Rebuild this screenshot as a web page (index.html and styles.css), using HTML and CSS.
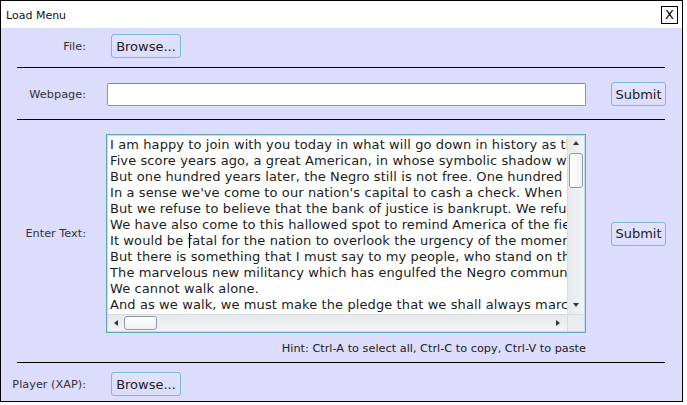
FILE: index.html
```html
<!DOCTYPE html>
<html>
<head>
<meta charset="utf-8">
<link rel="stylesheet" href="styles.css">
</head>
<body>
<div class="window">
  <div class="titlebar">
    <span class="title">Load Menu</span>
    <span class="close">X</span>
  </div>
  <div class="panel">
    <div class="row row-file">
      <div class="label">File:</div>
      <div class="field"><button class="btn browse">Browse...</button></div>
    </div>
    <div class="sep"></div>
    <div class="row row-web">
      <div class="label">Webpage:</div>
      <div class="field"><div class="input"></div></div>
      <button class="btn submit">Submit</button>
    </div>
    <div class="sep"></div>
    <div class="text-section">
      <div class="row row-text">
        <div class="label">Enter Text:</div>
        <div class="field">
          <div class="textarea">
            <div class="text-view">
              <div class="line">I am happy to join with you today in what will go down in history as the greatest demonstration for freedom in the history of our nation.</div>
              <div class="line">Five score years ago, a great American, in whose symbolic shadow we stand today, signed the Emancipation Proclamation.</div>
              <div class="line">But one hundred years later, the Negro still is not free. One hundred years later, the life of the Negro is still sadly crippled.</div>
              <div class="line">In a sense we've come to our nation's capital to cash a check. When the architects of our republic wrote the magnificent words.</div>
              <div class="line">But we refuse to believe that the bank of justice is bankrupt. We refuse to believe that there are insufficient funds.</div>
              <div class="line">We have also come to this hallowed spot to remind America of the fierce urgency of Now.</div>
              <div class="line">It would be f<span class="caret"></span>atal for the nation to overlook the urgency of the moment.</div>
              <div class="line">But there is something that I must say to my people, who stand on the warm threshold which leads into the palace of justice.</div>
              <div class="line">The marvelous new militancy which has engulfed the Negro community must not lead us to a distrust of all white people.</div>
              <div class="line">We cannot walk alone.</div>
              <div class="line">And as we walk, we must make the pledge that we shall always march ahead.</div>
            </div>
            <div class="vscroll">
              <span class="arrow up"></span>
              <span class="vthumb"></span>
              <span class="vspace"></span>
              <span class="arrow down"></span>
            </div>
            <div class="hscroll">
              <span class="arrow left"></span>
              <span class="hthumb"></span>
              <span class="hspace"></span>
              <span class="arrow right"></span>
            </div>
            <div class="corner"></div>
          </div>
        </div>
        <button class="btn submit">Submit</button>
      </div>
      <div class="hint">Hint: Ctrl-A to select all, Ctrl-C to copy, Ctrl-V to paste</div>
    </div>
    <div class="sep"></div>
    <div class="row row-player">
      <div class="label">Player (XAP):</div>
      <div class="field"><button class="btn browse">Browse...</button></div>
    </div>
  </div>
</div>
</body>
</html>
```

FILE: styles.css
```css
* { box-sizing: border-box; }
html, body { margin: 0; padding: 0; background: #ffffff; }
body { font-family: "DejaVu Sans", Verdana, sans-serif; color: #222; }

.window {
  width: 683px;
  height: 402px;
  border: 1px solid #000;
  background: #dcdcfc;
  display: flex;
  flex-direction: column;
}

.titlebar {
  flex: none;
  height: 27px;
  background: #fff;
  display: flex;
  align-items: flex-start;
  justify-content: space-between;
  padding: 0 4px 0 5px;
}
.title {
  font-size: 11px;
  line-height: 13px;
  margin-top: 8px;
  color: #111;
}
.close {
  margin-top: 5px;
  width: 17px;
  height: 18px;
  border: 1px solid #000;
  font-size: 13px;
  line-height: 16px;
  text-align: center;
  color: #000;
}

.panel { display: flex; flex-direction: column; flex: 1; min-height: 0; }

.row { display: flex; align-items: center; flex: none; }
.label {
  width: 85px;
  margin-right: 21px;
  text-align: right;
  font-size: 11.3px;
  color: #333;
  white-space: nowrap;
}
.field { width: 479px; }

.row-file { padding: 6px 0 9px; }
.row-web { padding: 14px 0 13px; }
.row-text { padding-top: 14px; }
.row-player { padding-top: 9px; }

.sep {
  flex: none;
  height: 1px;
  background: #000;
  margin-left: 16px;
  width: 648px;
}

.btn {
  font-family: "DejaVu Sans", Verdana, sans-serif;
  font-size: 13px;
  color: #222;
  background: linear-gradient(#e2e2fc, #dcdcfc);
  border: 1px solid #78bcd4;
  border-radius: 3px;
  height: 24px;
  padding: 0 4px;
  margin: 0;
}
.browse { width: 70px; margin-left: 4px; }
.submit { width: 55px; margin-left: 25px; padding: 0; }

.input {
  width: 479px;
  height: 23px;
  background: #fff;
  border: 1px solid #8a97ab;
  border-top-color: #7c889c;
  border-radius: 2px;
}

.textarea {
  width: 480px;
  height: 199px;
  margin-left: -1px;
  background: #fff;
  border: 1px solid #5ea6ba;
  box-shadow: inset 0 0 0 1px #bfe0ea;
  display: grid;
  grid-template-columns: 1fr 17px;
  grid-template-rows: 1fr 17px;
  padding: 1px;
}
.text-view {
  overflow: hidden;
  padding: 1px 0 0 2px;
  font-size: 13px;
  letter-spacing: 0.1px;
  line-height: 16px;
  color: #1c1c1c;
}
.line { white-space: pre; }
.caret {
  display: inline-block;
  width: 0;
  height: 15px;
  border-left: 1px solid #000;
  vertical-align: -3px;
  margin-left: -3px;
  margin-right: 2px;
}

.vscroll {
  background: linear-gradient(90deg, #e6e9ed, #f2f3f5);
  border-left: 1px solid #d9dde2;
  display: flex;
  flex-direction: column;
  align-items: center;
}
.hscroll {
  background: linear-gradient(#e6e9ed, #f2f3f5);
  border-top: 1px solid #d9dde2;
  display: flex;
  align-items: center;
}
.corner { background: #e9ebee; border-left: 1px solid #d9dde2; border-top: 1px solid #d9dde2; }

.arrow { width: 0; height: 0; flex: none; }
.up { border-left: 3px solid transparent; border-right: 3px solid transparent; border-bottom: 4px solid #333; margin-top: 5px; }
.down { border-left: 3px solid transparent; border-right: 3px solid transparent; border-top: 4px solid #333; margin-bottom: 7px; }
.left { border-top: 3px solid transparent; border-bottom: 3px solid transparent; border-right: 4px solid #333; margin-left: 6px; }
.right { border-top: 3px solid transparent; border-bottom: 3px solid transparent; border-left: 4px solid #333; margin-right: 7px; }

.vthumb {
  width: 14px;
  height: 35px;
  margin-top: 8px;
  border: 1px solid #8f9ba8;
  border-radius: 3px;
  background: linear-gradient(90deg, #ffffff, #eef0f3);
}
.vspace { flex: 1; }
.hthumb {
  width: 33px;
  height: 14px;
  margin-left: 6px;
  border: 1px solid #8f9ba8;
  border-radius: 3px;
  background: linear-gradient(#ffffff, #eef0f3);
}
.hspace { flex: 1; }

.hint {
  width: 585px;
  text-align: right;
  font-size: 11.3px;
  line-height: 13px;
  color: #222;
  margin-top: 9px;
  height: 20px;
}
```
